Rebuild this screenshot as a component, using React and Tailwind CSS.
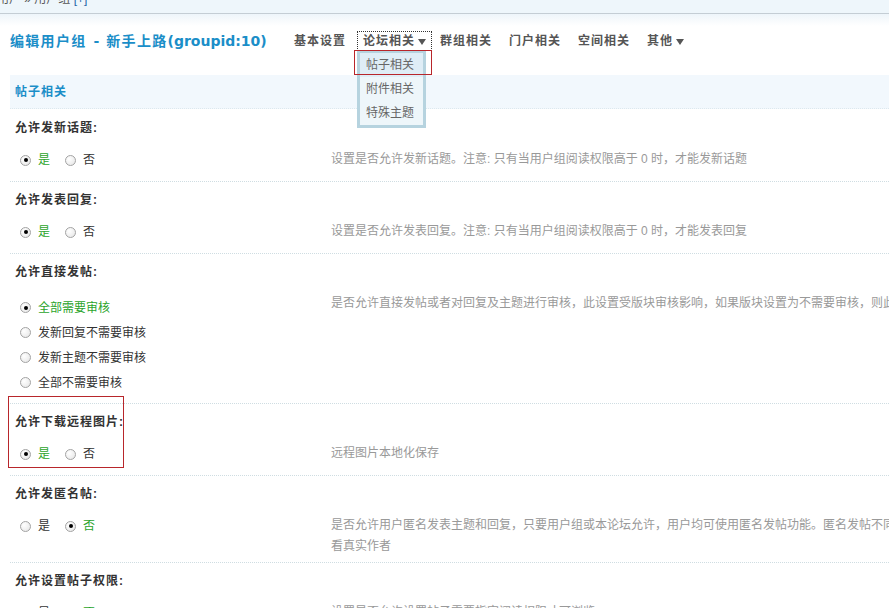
import React from "react";

// radio drawn by hand, the native one has a blue accent in chromium
const Radio = ({ on }) => (
  <span className="inline-flex w-[11px] h-[11px] shrink-0 items-center justify-center rounded-full border border-[#a3a3a3] bg-[radial-gradient(circle_at_35%_35%,#ffffff,#e4e4e4)]">
    {on && <span className="w-[4px] h-[4px] rounded-full bg-black" />}
  </span>
);

const Choice = ({ label, on, className = "" }) => (
  <span className={`inline-flex items-center ${className}`}>
    <Radio on={on} />
    <span className={`ml-[7px] ${on ? "text-[#2ba42b]" : "text-[#333]"}`}>{label}</span>
  </span>
);

const Caret = () => (
  <svg width="8" height="6" viewBox="0 0 8 6" className="ml-[3px] mt-[1px]">
    <path d="M0 0 H8 L4 6 Z" fill="#555" />
  </svg>
);

const rows = [
  {
    title: "允许发新话题:",
    opts: [["是", true], ["否", false]],
    desc: ["设置是否允许发新话题。注意: 只有当用户组阅读权限高于 0 时，才能发新话题"],
  },
  {
    title: "允许发表回复:",
    opts: [["是", true], ["否", false]],
    desc: ["设置是否允许发表回复。注意: 只有当用户组阅读权限高于 0 时，才能发表回复"],
  },
  {
    title: "允许直接发帖:",
    list: true,
    opts: [
      ["全部需要审核", true],
      ["发新回复不需要审核", false],
      ["发新主题不需要审核", false],
      ["全部不需要审核", false],
    ],
    desc: ["是否允许直接发帖或者对回复及主题进行审核，此设置受版块审核影响，如果版块设置为不需要审核，则此设置无效"],
  },
  {
    title: "允许下载远程图片:",
    mark: true,
    opts: [["是", true], ["否", false]],
    desc: ["远程图片本地化保存"],
  },
  {
    title: "允许发匿名帖:",
    opts: [["是", false], ["否", true]],
    desc: [
      "是否允许用户匿名发表主题和回复，只要用户组或本论坛允许，用户均可使用匿名发帖功能。匿名发帖不同于游客发帖，用户需要登录后才可使用，版主和管理员可以查",
      "看真实作者",
    ],
  },
  {
    title: "允许设置帖子权限:",
    opts: [["是", false], ["否", true]],
    desc: ["设置是否允许设置帖子需要指定阅读权限才可浏览"],
  },
];

const navItems = ["基本设置", "论坛相关", "群组相关", "门户相关", "空间相关", "其他"];

export default function App() {
  return (
    <div className="relative w-[889px] h-[608px] overflow-hidden bg-white text-[12px] font-['Liberation_Sans','Noto_Sans_CJK_SC',sans-serif]">
      {/* breadcrumb, cut off by the top of the window */}
      <div className="h-[14px] overflow-hidden bg-[#eef6fb] border-b border-[#c4cdd4]">
        <div className="-mt-[10px] -ml-[3px] leading-[18px] whitespace-nowrap text-[#555]">
          用户 » 用户组 <span className="text-[#2366a8]">[+]</span>
        </div>
      </div>

      {/* title + tabs */}
      <div className="flex items-start h-[61px] pt-[17px] pl-[10px] bg-[linear-gradient(#eef5fa,#ffffff_12px)]">
        <h3 className="w-[278px] shrink-0 whitespace-nowrap text-[14px] font-bold leading-[20px] text-[#1b8ec8] font-['DejaVu_Sans','Noto_Sans_CJK_SC',sans-serif]">
          <span className="tracking-[1.3px]">编辑用户组</span>
          <span className="mx-[7px]">-</span>
          <span className="tracking-[1.3px]">新手上路</span>(groupid:10)
        </h3>
        <ul className="flex gap-[5px] text-[12px] font-bold leading-[18px] text-[#555]">
          {navItems.map((item, i) => (
            <li
              key={item}
              className={`relative flex items-center h-[20px] px-[5px] border ${
                i === 1 ? "border-dotted border-[#333] -mr-[3px]" : "border-transparent"
              }`}
            >
              <span className="tracking-[1px]">{item}</span>
              {(i === 1 || i === 5) && <Caret />}
              {i === 1 && (
                <div className="absolute left-[-1px] top-[19px] w-[69px] border-[3px] border-t-[2px] border-[#b6d3df] bg-[#eef6fa] font-normal text-[#666]">
                  <div className="h-[24px] flex items-center pl-[6px] bg-[#dfedf6]">帖子相关</div>
                  <div className="h-[24px] flex items-center pl-[6px]">附件相关</div>
                  <div className="h-[24px] flex items-center pl-[6px]">特殊主题</div>
                  <div className="absolute left-[-6px] top-[-3px] w-[78px] h-[25px] border border-[#b8262b]" />
                </div>
              )}
            </li>
          ))}
        </ul>
      </div>

      <div className="ml-[10px]">
        {/* section band */}
        <div className="h-[34px] flex items-center pl-[5px] bg-[#f2f8fd] border-b border-dotted border-[#dde8ee]">
          <span className="font-bold tracking-[1px] text-[#1b8ec8]">帖子相关</span>
        </div>

        {rows.map((row, i) => (
          <div
            key={row.title}
            className={`relative border-t border-dotted ${i === 0 ? "border-transparent" : "border-[#cfdde2]"}`}
          >
            <div className="h-[36px] flex items-center pl-[5px] font-bold tracking-[1px] text-[#333]">{row.title}</div>
            <div className="flex">
              {row.list ? (
                <div className="w-[321px] shrink-0 pl-[10px] pt-[5px] pb-[8px]">
                  {row.opts.map(([label, on]) => (
                    <div key={label} className="h-[25px] flex items-center">
                      <Choice label={label} on={on} />
                    </div>
                  ))}
                </div>
              ) : (
                <div className="w-[321px] shrink-0 pl-[10px] pt-[5px] pb-[12px] leading-[18px] flex items-start">
                  {row.opts.map(([label, on], j) => (
                    <Choice key={label} label={label} on={on} className={j === 0 ? "mr-[15px] h-[18px]" : "h-[18px]"} />
                  ))}
                </div>
              )}
              <div className="pt-[3px] pb-[5px] leading-[21px] text-[#999]">
                {row.desc.map((line) => (
                  <div key={line} className="whitespace-nowrap">{line}</div>
                ))}
              </div>
            </div>
            {row.mark && (
              <div className="absolute left-[-2px] top-[-8px] w-[116px] h-[72px] border border-[#b8262b]" />
            )}
          </div>
        ))}
      </div>
    </div>
  );
}
